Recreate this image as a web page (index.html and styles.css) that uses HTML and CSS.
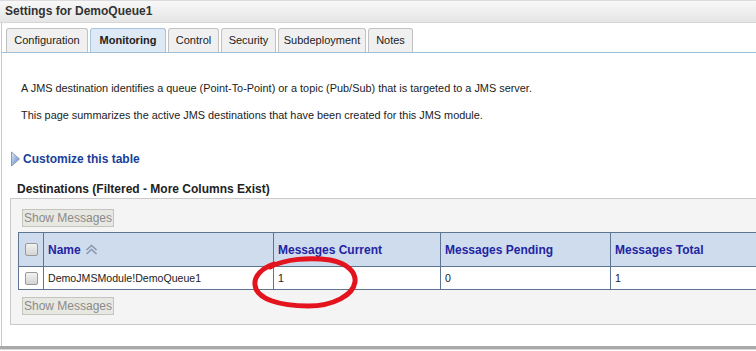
FILE: index.html
```html
<!DOCTYPE html>
<html lang="en">
<head>
    <meta charset="UTF-8">
    <title>Settings for DemoQueue1</title>
    <link rel="stylesheet" href="styles.css">
</head>
<body>
    <div class="panel">
        <div class="title-bar">Settings for DemoQueue1</div>
        <div class="panel-body">
            <ul class="tabs">
                <li class="tab tab-config">Configuration</li>
                <li class="tab tab-monitor active">Monitoring</li>
                <li class="tab tab-control">Control</li>
                <li class="tab tab-security">Security</li>
                <li class="tab tab-subdeploy">Subdeployment</li>
                <li class="tab tab-notes">Notes</li>
            </ul>

            <div class="intro">
                <p>A JMS destination identifies a queue (Point-To-Point) or a topic (Pub/Sub) that is targeted to a JMS server.</p>
                <p>This page summarizes the active JMS destinations that have been created for this JMS module.</p>
            </div>

            <a class="customize" href="#">
                <svg width="11" height="16" viewBox="0 0 11 16">
                    <defs>
                        <linearGradient id="tri" x1="0" y1="0" x2="1" y2="1">
                            <stop offset="0" stop-color="#e4edf9"/>
                            <stop offset="1" stop-color="#4f7fc6"/>
                        </linearGradient>
                    </defs>
                    <polygon points="1.5,1 9.5,8 1.5,15" fill="url(#tri)" stroke="#8d9bb0" stroke-width="1"/>
                </svg>
                Customize this table
            </a>

            <div class="table-title">Destinations (Filtered - More Columns Exist)</div>

            <div class="table-box">
                <button class="btn" disabled>Show Messages</button>
                <div class="table-wrap">
                    <table class="grid">
                        <colgroup>
                            <col class="col-check">
                            <col class="col-name">
                            <col class="col-current">
                            <col class="col-pending">
                            <col class="col-total">
                        </colgroup>
                        <thead>
                            <tr>
                                <th class="cell-check"><span class="check"></span></th>
                                <th>Name <svg class="sort" width="13" height="11" viewBox="0 0 13 11"><path d="M1.5 6 L6.5 1.5 L11.5 6 M1.5 10 L6.5 5.5 L11.5 10" fill="none" stroke="#8a96b0" stroke-width="1.6"/></svg></th>
                                <th>Messages Current</th>
                                <th>Messages Pending</th>
                                <th>Messages Total</th>
                            </tr>
                        </thead>
                        <tbody>
                            <tr>
                                <td class="cell-check"><span class="check"></span></td>
                                <td>DemoJMSModule!DemoQueue1</td>
                                <td class="link">1</td>
                                <td class="zero">0</td>
                                <td>1</td>
                            </tr>
                        </tbody>
                    </table>
                    <svg class="mark" width="112" height="58" viewBox="0 0 112 58">
                        <path d="M20 14 C35 6 60 4 80 7 C97 10 106 19 105 29 C103 42 84 53 58 53 C30 53 6 46 5 32 C4 23 12 15 24 11"
                              fill="none" stroke="#e3141e" stroke-width="5" stroke-linecap="round"/>
                    </svg>
                </div>
                <button class="btn" disabled>Show Messages</button>
            </div>
        </div>
    </div>
</body>
</html>
```

FILE: styles.css
```css
html, body {
    margin: 0;
    padding: 0;
    background: #fff;
    overflow: hidden;
}
body {
    font-family: "Liberation Sans", Arial, sans-serif;
    font-size: 11px;
    color: #222;
    width: 756px;
    height: 351px;
}
.panel {
    border-top: 1px solid #dcdcdc;
    border-bottom: 3px solid #a9a9a9;
    box-shadow: 0 1px 0 #d8d8d8;
    height: 349px;
    box-sizing: border-box;
    width: 900px;
}
.title-bar {
    height: 21px;
    line-height: 21px;
    padding-left: 5px;
    font-size: 12px;
    font-weight: bold;
    color: #333;
    background: linear-gradient(#f8f8f8, #e5e5e5);
    border-bottom: 1px solid #d6d6d6;
}
.panel-body {
    border-left: 1px solid #c8c8c8;
    margin-left: 1px;
    height: 323px;
}
.tabs {
    list-style: none;
    margin: 0;
    padding: 5px 0 0 4px;
    display: flex;
    gap: 2px;
    border-bottom: 1px solid #9dbfd9;
    width: 750px;
}
.tab {
    height: 24px;
    line-height: 23px;
    box-sizing: border-box;
    text-align: center;
    background: #f0f0f0;
    border: 1px solid #c2c2c2;
    border-bottom: none;
    border-radius: 3px 3px 0 0;
    color: #222;
}
.tab.active {
    background: #dde9f5;
    border-color: #a8c4dc;
    font-weight: bold;
}
.tab-config { width: 82px; }
.tab-monitor { width: 76px; }
.tab-control { width: 51px; }
.tab-security { width: 55px; }
.tab-subdeploy { width: 88px; }
.tab-notes { width: 45px; }
.intro {
    padding: 29px 0 0 19px;
}
.intro p {
    margin: 0 0 14px 0;
    line-height: 13px;
    font-size: 10.9px;
}
.intro p + p {
    margin-top: 1px;
}
.customize {
    display: flex;
    align-items: center;
    gap: 2px;
    margin: 29px 0 0 8px;
    font-size: 12px;
    font-weight: bold;
    color: #173f98;
    text-decoration: none;
}
.table-title {
    margin: 15px 0 0 15px;
    font-size: 12px;
    font-weight: bold;
    color: #222;
    height: 15px;
}
.table-box {
    margin: 1px 0 0 8px;
    background: #f4f4f4;
    border: 1px solid #cacaca;
    padding: 10px 0 9px 7px;
    width: 860px;
}
.btn {
    display: block;
    margin-left: 4px;
    height: 18px;
    width: 92px;
    padding: 0;
    font-family: "Liberation Sans", Arial, sans-serif;
    font-size: 12px;
    color: #8a8a8a;
    background: #e8e8e2;
    border: 1px solid #c4c4bc;
}
.table-wrap {
    position: relative;
    margin: 5px 0 7px 0;
}
.grid {
    border-collapse: collapse;
    width: 831px;
    table-layout: fixed;
}
.col-check { width: 25px; }
.col-name { width: 230px; }
.col-current { width: 167px; }
.col-pending { width: 170px; }
.col-total { width: 239px; }
.grid th, .grid td {
    border: 1px solid #5d7590;
    text-align: left;
    padding: 0 4px;
}
.grid th {
    height: 33px;
    background: #cfdcee;
    border-left-color: #fff;
    font-size: 12px;
    font-weight: bold;
    color: #2324a2;
}
.grid th:first-child {
    border-left-color: #5d7590;
}
.grid td {
    height: 22px;
    background: #fff;
    color: #222;
    font-size: 10.6px;
}
.grid .cell-check {
    padding: 0 0 0 6px;
}
.sort {
    vertical-align: -1px;
    margin-left: 1px;
}
.check {
    display: block;
    width: 11px;
    height: 11px;
    border: 1px solid #9a9a9a;
    border-radius: 2px;
    background: linear-gradient(#f2f2f2, #d4d4d4);
}
.link {
    color: #1d2ba8;
}
.zero {
    color: #7a0f2a;
}
.mark {
    position: absolute;
    left: 232px;
    top: 21px;
}
```
